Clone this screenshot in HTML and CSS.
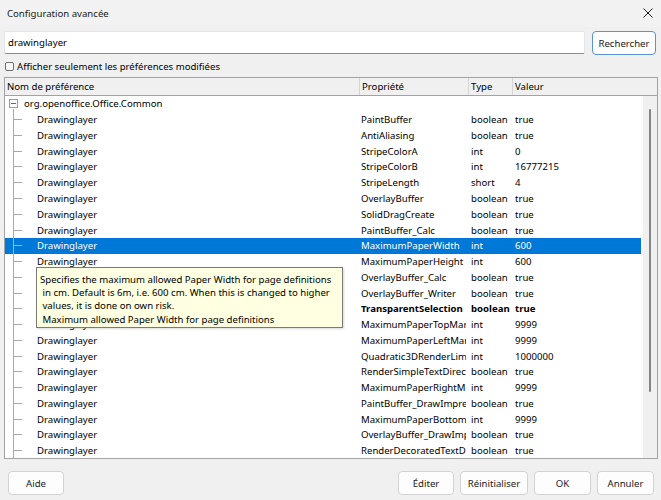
FILE: index.html
```html
<!DOCTYPE html>
<html lang="fr">
<head>
<meta charset="utf-8">
<title>Configuration avancée</title>
<link rel="stylesheet" href="styles.css">
</head>
<body>
<div class="dialog">
  <div class="titlebar">
    <span class="title">Configuration avancée</span>
    <svg class="close" width="10" height="10" viewBox="0 0 10 10"><path d="M0.5 0.5L9.5 9.5M9.5 0.5L0.5 9.5" stroke="#1a1a1a" stroke-width="1" fill="none"/></svg>
  </div>
  <div class="search">
    <div class="input">drawinglayer</div>
    <button class="btn btn-default">Rechercher</button>
  </div>
  <div class="checkrow">
    <span class="checkbox"></span>
    <span>Afficher seulement les préférences modifiées</span>
  </div>
  <div class="tree">
    <div class="thead">
      <div class="th">Nom de préférence</div>
      <div class="th">Propriété</div>
      <div class="th">Type</div>
      <div class="th last">Valeur</div>
    </div>
    <div class="tbody">
      <div class="rows">
        <div class="row root">
          <div class="c1"><span class="twig root-twig"><svg class="box" width="9" height="9" viewBox="0 0 9 9"><rect x="0.5" y="0.5" width="8" height="8" fill="#fff" stroke="#9a9a9a"/><path d="M2 4.5H7" stroke="#6a6a6a"/></svg></span>org.openoffice.Office.Common</div>
          <div class="c2"></div><div class="c3"></div><div class="c4"></div>
        </div>
        <div class="row"><div class="c1"><span class="twig"></span>Drawinglayer</div><div class="c2">PaintBuffer</div><div class="c3">boolean</div><div class="c4">true</div></div>
        <div class="row"><div class="c1"><span class="twig"></span>Drawinglayer</div><div class="c2">AntiAliasing</div><div class="c3">boolean</div><div class="c4">true</div></div>
        <div class="row"><div class="c1"><span class="twig"></span>Drawinglayer</div><div class="c2">StripeColorA</div><div class="c3">int</div><div class="c4">0</div></div>
        <div class="row"><div class="c1"><span class="twig"></span>Drawinglayer</div><div class="c2">StripeColorB</div><div class="c3">int</div><div class="c4">16777215</div></div>
        <div class="row"><div class="c1"><span class="twig"></span>Drawinglayer</div><div class="c2">StripeLength</div><div class="c3">short</div><div class="c4">4</div></div>
        <div class="row"><div class="c1"><span class="twig"></span>Drawinglayer</div><div class="c2">OverlayBuffer</div><div class="c3">boolean</div><div class="c4">true</div></div>
        <div class="row"><div class="c1"><span class="twig"></span>Drawinglayer</div><div class="c2">SolidDragCreate</div><div class="c3">boolean</div><div class="c4">true</div></div>
        <div class="row"><div class="c1"><span class="twig"></span>Drawinglayer</div><div class="c2">PaintBuffer_Calc</div><div class="c3">boolean</div><div class="c4">true</div></div>
        <div class="row selected"><div class="c1"><span class="twig"></span>Drawinglayer</div><div class="c2">MaximumPaperWidth</div><div class="c3">int</div><div class="c4">600</div></div>
        <div class="row"><div class="c1"><span class="twig"></span>Drawinglayer</div><div class="c2">MaximumPaperHeight</div><div class="c3">int</div><div class="c4">600</div></div>
        <div class="row"><div class="c1"><span class="twig"></span>Drawinglayer</div><div class="c2">OverlayBuffer_Calc</div><div class="c3">boolean</div><div class="c4">true</div></div>
        <div class="row"><div class="c1"><span class="twig"></span>Drawinglayer</div><div class="c2">OverlayBuffer_Writer</div><div class="c3">boolean</div><div class="c4">true</div></div>
        <div class="row modified"><div class="c1"><span class="twig"></span>Drawinglayer</div><div class="c2">TransparentSelection</div><div class="c3">boolean</div><div class="c4">true</div></div>
        <div class="row"><div class="c1"><span class="twig"></span>Drawinglayer</div><div class="c2">MaximumPaperTopMargin</div><div class="c3">int</div><div class="c4">9999</div></div>
        <div class="row"><div class="c1"><span class="twig"></span>Drawinglayer</div><div class="c2">MaximumPaperLeftMargin</div><div class="c3">int</div><div class="c4">9999</div></div>
        <div class="row"><div class="c1"><span class="twig"></span>Drawinglayer</div><div class="c2">Quadratic3DRenderLimit</div><div class="c3">int</div><div class="c4">1000000</div></div>
        <div class="row"><div class="c1"><span class="twig"></span>Drawinglayer</div><div class="c2">RenderSimpleTextDirect</div><div class="c3">boolean</div><div class="c4">true</div></div>
        <div class="row"><div class="c1"><span class="twig"></span>Drawinglayer</div><div class="c2">MaximumPaperRightMargin</div><div class="c3">int</div><div class="c4">9999</div></div>
        <div class="row"><div class="c1"><span class="twig"></span>Drawinglayer</div><div class="c2">PaintBuffer_DrawImpress</div><div class="c3">boolean</div><div class="c4">true</div></div>
        <div class="row"><div class="c1"><span class="twig"></span>Drawinglayer</div><div class="c2">MaximumPaperBottomMargin</div><div class="c3">int</div><div class="c4">9999</div></div>
        <div class="row"><div class="c1"><span class="twig"></span>Drawinglayer</div><div class="c2">OverlayBuffer_DrawImpress</div><div class="c3">boolean</div><div class="c4">true</div></div>
        <div class="row"><div class="c1"><span class="twig"></span>Drawinglayer</div><div class="c2">RenderDecoratedTextDirect</div><div class="c3">boolean</div><div class="c4">true</div></div>
      </div>
      <div class="scrollbar"><div class="thumb"></div></div>
    </div>
  </div>
  <div class="footer">
    <button class="btn w56">Aide</button>
    <span class="spacer"></span>
    <button class="btn w56">Éditer</button>
    <button class="btn w68">Réinitialiser</button>
    <button class="btn w57">OK</button>
    <button class="btn w57">Annuler</button>
  </div>
  <div class="tooltip">Specifies the maximum allowed Paper Width for page definitions
 in cm. Default is 6m, i.e. 600 cm. When this is changed to higher
 values, it is done on own risk.
 Maximum allowed Paper Width for page definitions</div>
</div>
</body>
</html>
```

FILE: styles.css
```css
* { box-sizing: border-box; }
html, body { margin: 0; padding: 0; }
body {
  background: #f0f0f0;
  font-family: "Noto Sans", "Open Sans", sans-serif;
  font-size: 9.6px;
  color: #000;
  width: 661px;
  height: 500px;
  overflow: hidden;
}
.dialog {
  position: relative;
  display: flex;
  flex-direction: column;
  height: 500px;
}
.titlebar {
  height: 27px;
  display: flex;
  align-items: center;
  justify-content: space-between;
  padding: 0 8px 1px 7px;
  background: #f2f2f2;
}
.title { font-size: 9.6px; color: #1a1a1a; }
.close { display: block; }
.search {
  display: flex;
  align-items: flex-start;
  gap: 7px;
  padding: 4px 5px 0 4px;
}
.input {
  width: 581px;
  height: 23px;
  background: #fff;
  border: 1px solid #e6e6e6;
  border-bottom-color: #8c8c8c;
  border-radius: 2px;
  padding-left: 3px;
  display: flex;
  align-items: center;
}
.btn {
  font: inherit;
  color: #1a1a1a;
  height: 24px;
  background: #fdfdfd;
  border: 1px solid #d3d3d3;
  border-radius: 4px;
  padding: 0;
  display: flex;
  align-items: center;
  justify-content: center;
}
.btn-default {
  width: 64px;
  border-color: #5b93cf;
}
.checkrow {
  height: 22px;
  display: flex;
  align-items: center;
  gap: 3px;
  padding-left: 5px;
}
.checkbox {
  width: 9px;
  height: 9px;
  border: 1px solid #6f6f6f;
  border-radius: 2px;
  background: #fbfbfb;
}
.tree {
  margin-left: 4px;
  width: 654px;
  height: 382px;
  border: 1px solid #a3a3a3;
  background: #fff;
  display: flex;
  flex-direction: column;
}
.thead {
  height: 18px;
  display: grid;
  grid-template-columns: 355px 109px 44px 1fr;
  background: #f0f0f0;
  border-bottom: 1px solid #a3a3a3;
}
.th {
  padding-left: 2px;
  display: flex;
  align-items: center;
  border-right: 1px solid #d5d5d5;
  white-space: nowrap;
}
.th.last { border-right: none; }
.tbody {
  flex: 1;
  display: flex;
  overflow: hidden;
}
.rows {
  width: 638px;
  display: flex;
  flex-direction: column;
}
.row {
  height: 15.77px;
  flex: none;
  display: grid;
  grid-template-columns: 355px 109px 44px 1fr;
  align-items: center;
  white-space: nowrap;
}
.row > div { overflow: hidden; }
.c1 {
  display: flex;
  align-items: center;
  height: 100%;
}
.c2 { padding-left: 1px; margin-right: 3px; }
.c3 { padding-left: 2px; }
.c4 { padding-left: 2px; }
.twig {
  width: 32px;
  height: 100%;
  flex: none;
  background:
    linear-gradient(#a8a8a8, #a8a8a8) 8px 0 / 1px 100% no-repeat,
    linear-gradient(#a8a8a8, #a8a8a8) 9px 50% / 8px 1px no-repeat;
}
.root .twig {
  width: 19px;
  display: flex;
  align-items: center;
  padding-left: 4px;
  background: linear-gradient(#a8a8a8, #a8a8a8) 8px 100% / 1px 3px no-repeat;
}
.box { display: block; }
.selected { background: #0078d7; color: #fff; }
.selected .twig {
  background:
    linear-gradient(#8cbbe6, #8cbbe6) 8px 0 / 1px 100% no-repeat,
    linear-gradient(#8cbbe6, #8cbbe6) 9px 50% / 8px 1px no-repeat;
}
.modified { font-weight: 700; }
.scrollbar {
  width: 14px;
  margin-left: 2px;
  background: #f0f0f0;
  padding: 13px 0 0 6px;
}
.thumb {
  width: 2px;
  height: 283px;
  background: #858585;
  border-radius: 1px;
}
.footer {
  display: flex;
  gap: 6px;
  padding: 12px 7px 0 8px;
}
.spacer { flex: 1; }
.w56 { width: 56px; }
.w57 { width: 57px; }
.w68 { width: 68px; }
.tooltip {
  position: absolute;
  left: 36px;
  top: 267px;
  width: 307px;
  height: 61px;
  background: #ffffe1;
  border: 1px solid #7a7a7a;
  padding: 5px 0 0 3px;
  white-space: pre;
  line-height: 13.2px;
  box-shadow: 1px 1px 2px rgba(0,0,0,0.15);
}
```
